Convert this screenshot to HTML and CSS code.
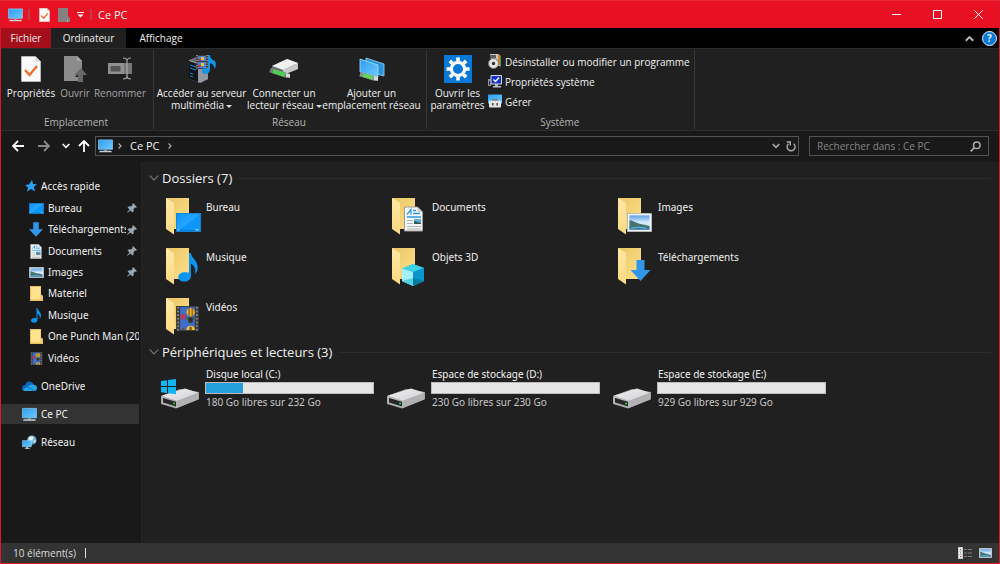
FILE: index.html
```
<!DOCTYPE html>
<html lang="fr">
<head>
<meta charset="utf-8">
<title>Ce PC</title>
<link rel="stylesheet" href="styles.css">
</head>
<body>
<svg class="sprite" aria-hidden="true">
  <defs>
    <linearGradient id="gScreen" x1="0" y1="0" x2="1" y2="1"><stop offset="0" stop-color="#2f9df0"/><stop offset="1" stop-color="#6cc8ff"/></linearGradient>
    <linearGradient id="gDesk" x1="0" y1="0" x2="1" y2="1"><stop offset="0" stop-color="#0a96fb"/><stop offset=".5" stop-color="#27a5ff"/><stop offset=".51" stop-color="#0c98fc"/><stop offset="1" stop-color="#0a96fb"/></linearGradient>
    <linearGradient id="gFold" x1="0" y1="0" x2="1" y2="1"><stop offset="0" stop-color="#e9c766"/><stop offset="1" stop-color="#ffe08a"/></linearGradient>
    <linearGradient id="gFlap" x1="0" y1="0" x2="0" y2="1"><stop offset="0" stop-color="#ffe9a6"/><stop offset="1" stop-color="#fbd981"/></linearGradient>
    <linearGradient id="gDrive" x1="0" y1="0" x2="1" y2="1"><stop offset="0" stop-color="#f2f2f3"/><stop offset="1" stop-color="#cfcfd2"/></linearGradient>
    <linearGradient id="gSky" x1="0" y1="0" x2="0" y2="1"><stop offset="0" stop-color="#5c9fe8"/><stop offset=".5" stop-color="#d8ecfb"/><stop offset="1" stop-color="#9fd0ee"/></linearGradient>
    <radialGradient id="gGlobe" cx=".4" cy=".35" r=".7"><stop offset="0" stop-color="#c9eefa"/><stop offset="1" stop-color="#3a8db5"/></radialGradient>
  </defs>
  <symbol id="monitor" viewBox="0 0 16 14"><path d="M.5.5h15v10H.5z" fill="url(#gScreen)" stroke="#8fd0f5" stroke-width=".7"/><path d="M7 11h2v1.2H7z" fill="#b8c4cc"/><path d="M2 12h12l1 1.6H1z" fill="#c3d3dc"/></symbol>
  <symbol id="doccheck" viewBox="0 0 20 26"><path d="M.5.5h14l5 5v20H.5z" fill="#fbfbfb" stroke="#d0d0d0" stroke-width=".6"/><path d="M14.500.5v5h5" fill="#d8d8d8"/><path d="M4 14l4.500 5L16 10" fill="none" stroke="#f26a26" stroke-width="2.300"/></symbol>
  <symbol id="docopen" viewBox="0 0 24 28"><path d="M1 1h13l5 5v10h-2l-5 6h3v4H1z" fill="#8c8c8c"/><path d="M14 1v5h5" fill="#a9a9a9"/><path d="M18 13l6 7h-4v7h-5v-7h-4z" fill="#696969"/></symbol>
  <symbol id="rename" viewBox="0 0 26 26"><path d="M1 7h16v11H1z" fill="#909090"/><path d="M3.500 10h10v5.500h-10z" fill="#565656"/><path d="M17 7h8v11h-8z" fill="#777"/><path d="M16 2q4 0 4 3v15q0 3-4 3M24 2q-4 0-4 3m0 15q0 3 4 3" fill="none" stroke="#a8a8a8" stroke-width="1.200"/></symbol>
  <symbol id="film" viewBox="0 0 22 24"><path d="M0 0h22v24H0z" fill="#3e3d3b"/><path d="M2 1v23M20 1v23" stroke="#999" stroke-width="1.500" stroke-dasharray="1.500 2"/><path d="M4 1h14v22H4z" fill="#3e6dcc"/><path d="M4 9h6v4H4z" fill="#90477f"/><circle cx="14" cy="6" r="4" fill="#e9b52f"/><path d="M12.500 2v8m3-8v8" stroke="#7d4a22"/><path d="M9 11h9l-4 6z" fill="#247244"/><path d="M12 11h4v5h-4z" fill="#3b2a28"/><path d="M10 23q0-4 4-4t4 4z" fill="#efc12e"/><path d="M13 20h2v3h-2zM6 21h2v2H6z" fill="#7d4a22"/><path d="M5 8h3v3H5z" fill="#d3373a"/></symbol>
  <symbol id="note" viewBox="0 0 20 30"><path d="M11 0h2c.5 5 7 8 7 15 0 3-1 5-3 7 1.500-5 0-9-4-11v13c0 3-3 5.500-7 5.500C2.500 29.500 0 27.500 0 25c0-3 3-5 7-5 1.500 0 3 .2 4 .7z" fill="#0b96f2"/></symbol>
  <symbol id="server" viewBox="0 0 28 28"><path d="M1 5l7-3 12 3v19l-8 4-11-4z" fill="#686d74"/><path d="M1 5l9 3v19l-9-3z" fill="#10151b"/><path d="M10 8l10-3v19l-8 4-2-1z" fill="#9398a0"/><path d="M1 5l9 3v1L1 6z" fill="#b5bbc1"/><path d="M2 10l6 2M2 13l6 2M2 18l3 1M2 21l3 1" stroke="#1d86c9"/><path d="M8 0h12v14H8z" fill="#383c42"/><path d="M10 1h8v5h-8zm0 6h8v6h-8z" fill="#507fd1"/><path d="M13 2h3v3h-3zm0 6h3v3h-3z" fill="#ecc33e"/><path d="M10 4h3v2h-3zm0 6h3v2h-3z" fill="#a4414e"/><path d="M9 0v14M19 0v14" stroke="#d4d5d6" stroke-dasharray="1 1.500"/><path d="M20 0h2q0 4 5 6 2 4-.5 8Q26 9 22 8v6q0 5-5 5-3 0-3-3t4-3q1 0 2 .3z" fill="#1394e5"/></symbol>
  <symbol id="netdrive" viewBox="0 0 30 20"><path d="M3 7L18 0l11 4v6l-15 6L3 12z" fill="#8b8d90"/><path d="M3 7L18 0l11 4-15 7z" fill="#f0f0f1"/><path d="M3 7l11 4v5L3 12z" fill="#6d7073"/><path d="M14 11l15-7v6l-15 6z" fill="#c7c8ca"/><path d="M1 11l18 6" stroke="#73787a" stroke-width="5"/><path d="M4 12l12 4" stroke="#4fcf52" stroke-width="4"/><path d="M17 14l4 1v4l-4-1z" fill="#d6dadd"/></symbol>
  <symbol id="netplace" viewBox="0 0 26 24"><path d="M7 1l18 6v12l-18-5z" fill="#2a92d8" stroke="#98d8fb" stroke-width=".8"/><path d="M1 2l18 6v12L1 15z" fill="url(#gScreen)" stroke="#a5ddfa" stroke-width=".8"/><path d="M1 17l16 5" stroke="#8d9092" stroke-width="4.500"/><path d="M4 18l10 3" stroke="#5fd458" stroke-width="3.500"/><path d="M15 19l4 1v4l-4-1z" fill="#d6dadd"/></symbol>
  <symbol id="gear" viewBox="0 0 28 28"><path d="M0 0h28v28H0z" fill="#0a78d7"/><circle cx="14" cy="14" r="6.600" fill="none" stroke="#fff" stroke-width="3.200"/><g stroke="#fff" stroke-width="3.600"><path id="tooth" d="M14 2.500v3.700M14 21.800v3.700M2.500 14h3.700M21.800 14h3.700"/><use href="#tooth" transform="rotate(45 14 14)"/></g></symbol>
  <symbol id="uninstall" viewBox="0 0 14 15"><path d="M2 0h8l3 2v10H4z" fill="#c7c8bd"/><path d="M10 1h2v10h-2z" fill="#d9822d"/><path d="M12 2h1v11h-1z" fill="#3f9b5b"/><path d="M2 1h6v3H2z" fill="#5c6066"/><circle cx="5.500" cy="9.500" r="5" fill="#e2e4e6" stroke="#777"/><circle cx="5.500" cy="9.500" r="1.700" fill="#333"/></symbol>
  <symbol id="sysprop" viewBox="0 0 14 13"><path d="M3 .5h10.500v8.500H3z" fill="#1432d0" stroke="#d6d8dc"/><path d="M5.500 4.500l2 2L11 2.500" fill="none" stroke="#fff" stroke-width="1.400"/><path d="M0 4h3v7H0z" fill="#8e9499"/><path d="M1 6h1v4H1z" fill="#333"/><path d="M7 9h3v2H7zM5 11h8v1.500H5z" fill="#b9bdc1"/></symbol>
  <symbol id="manage" viewBox="0 0 14 14"><path d="M0 0h14v9H0z" fill="url(#gScreen)"/><path d="M4 5h6v2H4z" fill="#555"/><rect x="1" y="6" width="12" height="7" rx="1" fill="#e3e4e6"/><path d="M4 8.500h1.500v2.500H4zm4.500 0H10v2.500H8.500z" fill="#44484d"/></symbol>
  <symbol id="desk" viewBox="0 0 26 18" preserveAspectRatio="none"><path d="M.5.5h25v17H.5z" fill="url(#gDesk)" stroke="#1683d4"/><path d="M1 16.500h24" stroke="#087bd0"/><path d="M1.500 16h2M20 16h4" stroke="#9bd7ff"/></symbol>
  <symbol id="down" viewBox="0 0 20 21"><path d="M6 0h8v10h6L10 21 0 10h6z" fill="#3296e8"/></symbol>
  <symbol id="doc" viewBox="0 0 19 25"><path d="M.5.5h13l5 5v19H.5z" fill="#f4f5f6" stroke="#9c9c9c"/><path d="M13.500.5v5h5z" fill="#cfd2d4"/><path d="M3 8l4-5v5M9 4h3M9 7h7M3 10.500h14" fill="none" stroke="#2c9be0" stroke-width="1.300"/><path d="M3 14h6M3 17h6M3 20h14M3 22.500h14" stroke="#aeb4b8"/><path d="M10 12.500h7v5h-7z" fill="#65a6d8"/><path d="M10 17.500v-3l7 2v1z" fill="#285c55"/></symbol>
  <symbol id="pic" viewBox="0 0 26 20" preserveAspectRatio="none"><path d="M.5.5h25v19H.5z" fill="#f3f5f6" stroke="#b4b9bc"/><path d="M2.500 2.500h21v15h-21z" fill="url(#gSky)"/><path d="M2.500 15V7.500c3 0 4 1.500 7 2.500 4 2 10 2 14 4v1z" fill="#47736b"/><path d="M2.500 14l21 .5v3h-21z" fill="#2f789e"/><path d="M4 16q8-2 16 0" stroke="#7cbfd3" fill="none"/></symbol>
  <symbol id="cube" viewBox="0 0 22 22"><path d="M0 4.500L11 0l11 4v13l-11 5-11-5z" fill="#29b8d4"/><path d="M0 4.500L11 0l11 4-11 4z" fill="#3fd0e4"/><path d="M0 4.500L11 8v14L0 17z" fill="#a4effa"/><path d="M11 8l11-4v13l-11 5z" fill="#0896d0"/><path d="M0 17l11-3v8z" fill="#55cfe2"/><path d="M11 14l11 3-11 5z" fill="#067b9d"/></symbol>
  <symbol id="smallfolder" viewBox="0 0 13 15"><path d="M0 0h11v9l2 1v5H0z" fill="#e5c062"/><path d="M1 1h9.500v12.500H1z" fill="#ffe38e"/><path d="M11 8.500l1.500 1V14H9.500v-2l1.500-1z" fill="#f2cd69"/></symbol>
  <symbol id="folder" viewBox="0 0 36 38"><path d="M0 0h23v31H6z" fill="url(#gFold)"/><path d="M0 0l8 5v31.500L0 31z" fill="url(#gFlap)"/></symbol>
  <symbol id="f-desk" viewBox="0 0 36 38"><use href="#folder" width="36" height="38"/><use href="#desk" x="10" y="15" width="25" height="19"/></symbol>
  <symbol id="f-doc" viewBox="0 0 36 38"><use href="#folder" width="36" height="38"/><use href="#doc" x="12" y="8" width="19" height="26"/></symbol>
  <symbol id="f-pic" viewBox="0 0 36 38"><use href="#folder" width="36" height="38"/><use href="#pic" x="9" y="15" width="25" height="19"/></symbol>
  <symbol id="f-note" viewBox="0 0 36 38"><use href="#folder" width="36" height="38"/><use href="#note" x="12" y="5" width="20" height="29"/></symbol>
  <symbol id="f-cube" viewBox="0 0 36 38"><use href="#folder" width="36" height="38"/><use href="#cube" x="10" y="16" width="22" height="22"/></symbol>
  <symbol id="f-down" viewBox="0 0 36 38"><use href="#folder" width="36" height="38"/><use href="#down" x="12" y="12" width="21" height="21"/></symbol>
  <symbol id="f-film" viewBox="0 0 36 38"><use href="#folder" width="36" height="38"/><use href="#film" x="10" y="8" width="23" height="25"/></symbol>
  <symbol id="drive" viewBox="0 0 38 30"><path d="M0 17L19 10l19 3v7L15 29.500 0 25z" fill="#9b9b9d"/><path d="M.5 16.800L24 9.500l13.500 4.200L16 22z" fill="url(#gDrive)"/><path d="M16 22l21.500-8.300v6.800L16 29z" fill="#b1b1b4"/><path d="M.5 17L16 22v7L.5 24.500z" fill="#b8b8ba"/><path d="M2 19l13 3.800v4.700L2 23.500z" fill="#28282a"/><circle cx="13" cy="24.500" r="1" fill="#1fe82b"/></symbol>
  <symbol id="drivewin" viewBox="0 0 38 30"><use href="#drive" width="38" height="30"/><path d="M0 2l6-.8V7H0zM7 1l8-1v7H7zM0 8h6v6l-6-.8zM7 8h8v7.200l-8-1z" fill="#12b5f0"/></symbol>
  <symbol id="star" viewBox="0 0 12 12"><path d="M7 0l1 4 4 .3L8.800 7 10 11.500 6 9l-4 2.800L3 7.500 0 5l4-.5z" fill="#2aa2f0"/></symbol>
  <symbol id="cloud" viewBox="0 0 15 10"><path d="M3 4C4 1 7-.8 10 1.500c1 .8 1.500 1.500 1.800 2.500C14 4 15 5.500 15 7s-1 3-3 3H3C1 10 0 8.500 0 7s1-3 3-3z" fill="#0c67c0"/><path d="M2 8l6-4q3-1 4 0c2 0 3 1.500 3 3s-1 3-3 3H3q-1 0-2-1z" fill="#2aa5ea"/><path d="M5 5.800l7 3.700" stroke="#1583d2" stroke-width="1.500"/></symbol>
  <symbol id="network" viewBox="0 0 16 15"><circle cx="10.500" cy="5" r="5" fill="url(#gGlobe)"/><path d="M7 3l4-2 1 2-3 3zm5 3l3-1-1 3z" fill="#edfaff"/><path d="M.5 5.500h9.500v6.500H.5z" fill="url(#gScreen)" stroke="#9bd7f7" stroke-width=".6"/><path d="M4.500 12h2v1.500h2v1H3v-1h1.500z" fill="#afc7d3"/></symbol>
  <symbol id="pin" viewBox="0 0 10 10"><path d="M6 0l4 4-1 .7-1-.2-1.500 1.700.2 2L5.500 9.500l-2-2L.5 9.800 0 9.500 2.500 6.500l-2-2L2 3.200l2 .2L5.600 2l-.3-1z" fill="#9aa7b1"/></symbol>
  <symbol id="chev" viewBox="0 0 10 6"><path d="M.7.7L5 5 9.300.7" fill="none" stroke="currentColor" stroke-width="1.200"/></symbol>
  <symbol id="chevbold" viewBox="0 0 8 6"><path d="M.7 1L4 4.300 7.300 1" fill="none" stroke="currentColor" stroke-width="1.700"/></symbol>
  <symbol id="arrow" viewBox="0 0 12 12"><path d="M12 6H1.500M6 1L1 6l5 5" fill="none" stroke="currentColor" stroke-width="1.800"/></symbol>
  <symbol id="sep" viewBox="0 0 4 6"><path d="M.6.5L3 3 .6 5.500" fill="none" stroke="currentColor" stroke-width="1.200"/></symbol>
</svg>

<div class="window">
  <header class="titlebar">
    <svg class="ic-mon"><use href="#monitor"/></svg>
    <span class="bar"></span>
    <button class="plain q1" aria-label="Propriétés"><svg class="ic-doc"><use href="#doccheck"/></svg></button>
    <button class="plain q2" aria-label="Nouveau dossier"><svg class="ic-new" viewBox="0 0 12 14"><path d="M0 0h10v8l2 2v4H0z" fill="#878080"/><path d="M10 10v4H8" fill="#a79b9b"/></svg></button>
    <button class="plain q3" aria-label="Personnaliser"><svg class="ic-cust" viewBox="0 0 7 6"><path d="M0 .5h7" stroke="#fff"/><path d="M.5 2.500h6l-3 3z" fill="#fff"/></svg></button>
    <span class="bar"></span>
    <h1 class="title">Ce PC</h1>
    <div class="winbtns">
      <button class="plain" aria-label="Réduire"><svg class="ic-win" viewBox="0 0 9 9"><path d="M0 4.500h9" stroke="#fff"/></svg></button>
      <button class="plain" aria-label="Agrandir"><svg class="ic-win" viewBox="0 0 9 9"><path d="M.5.5h8v8h-8z" fill="none" stroke="#fff"/></svg></button>
      <button class="plain" aria-label="Fermer"><svg class="ic-win" viewBox="0 0 9 9"><path d="M.3.3l8.400 8.400M8.700.3L.3 8.700" stroke="#fff"/></svg></button>
    </div>
  </header>

  <div class="tabs">
    <button class="tab file">Fichier</button>
    <button class="tab active">Ordinateur</button>
    <button class="tab view">Affichage</button>
    <div class="tabtools">
      <button class="plain" aria-label="Réduire le ruban"><svg class="ic-up"><use href="#chevbold"/></svg></button>
      <button class="help" aria-label="Aide">?</button>
    </div>
  </div>

  <div class="ribbon">
    <section class="group g1">
      <div class="tools">
        <button class="big w-prop"><span class="pict"><svg class="p-doc"><use href="#doccheck"/></svg></span>Propriétés</button>
        <button class="big w-open off"><span class="pict"><svg class="p-open"><use href="#docopen"/></svg></span>Ouvrir</button>
        <button class="big w-ren off"><span class="pict"><svg class="p-ren"><use href="#rename"/></svg></span>Renommer</button>
      </div>
      <h2 class="caption">Emplacement</h2>
    </section>
    <section class="group g2">
      <div class="tools">
        <button class="big w-srv"><span class="pict"><svg class="p-srv"><use href="#server"/></svg></span>Accéder au serveur<br>multimédia<i class="tri"></i></button>
        <button class="big w-con"><span class="pict"><svg class="p-net"><use href="#netdrive"/></svg></span>Connecter un<br>lecteur réseau<i class="tri"></i></button>
        <button class="big w-add"><span class="pict"><svg class="p-place"><use href="#netplace"/></svg></span>Ajouter un<br>emplacement réseau</button>
      </div>
      <h2 class="caption">Réseau</h2>
    </section>
    <section class="group g3">
      <div class="tools">
        <button class="big w-set"><span class="pict"><svg class="p-srv"><use href="#gear"/></svg></span>Ouvrir les<br>paramètres</button>
        <div class="stack">
          <button class="small"><svg><use href="#uninstall"/></svg>Désinstaller ou modifier un programme</button>
          <button class="small"><svg><use href="#sysprop"/></svg>Propriétés système</button>
          <button class="small"><svg><use href="#manage"/></svg>Gérer</button>
        </div>
      </div>
      <h2 class="caption">Système</h2>
    </section>
  </div>

  <div class="navbar">
    <div class="navbtns">
      <button class="plain" aria-label="Précédent"><svg class="ic-arrow"><use href="#arrow"/></svg></button>
      <button class="plain fwd" aria-label="Suivant"><svg class="ic-arrow"><use href="#arrow"/></svg></button>
      <button class="plain recent" aria-label="Récents"><svg class="ic-rec"><use href="#chevbold"/></svg></button>
      <button class="plain up" aria-label="Dossier parent"><svg class="ic-arrow"><use href="#arrow"/></svg></button>
    </div>
    <div class="address">
      <svg class="ic-mon"><use href="#monitor"/></svg>
      <svg class="ic-sep"><use href="#sep"/></svg>
      <a href="#" class="crumb">Ce PC</a>
      <svg class="ic-sep"><use href="#sep"/></svg>
      <button class="plain more" aria-label="Emplacements précédents"><svg class="ic-rec"><use href="#chevbold"/></svg></button>
      <button class="plain reload" aria-label="Actualiser"><svg class="ic-load" viewBox="0 0 10 11"><path d="M7.600 2.700A4 4 0 1 1 2.600 2.700M.7 1h3.600v3.600" fill="none" stroke="#aaa" stroke-width="1.400"/></svg></button>
    </div>
    <label class="search">
      <input type="search" aria-label="Rechercher" placeholder="Rechercher dans : Ce PC">
      <svg class="ic-find" viewBox="0 0 11 11"><circle cx="6.800" cy="4.200" r="3.300" fill="none" stroke="#aaa" stroke-width="1.500"/><path d="M4.400 6.600L.7 10.300" stroke="#aaa" stroke-width="1.700"/></svg>
    </label>
  </div>

  <div class="body">
    <nav class="side">
      <div class="quick">
        <a href="#" class="row root"><svg><use href="#star" x="3" y="1" width="12" height="12"/></svg><span>Accès rapide</span></a>
        <a href="#" class="row"><svg><use href="#desk" y="2" width="15" height="11"/></svg><span class="cut">Bureau</span><svg class="ic-pin"><use href="#pin"/></svg></a>
        <a href="#" class="row"><svg><use href="#down" y="0" width="14" height="15"/></svg><span class="cut">Téléchargements</span><svg class="ic-pin"><use href="#pin"/></svg></a>
        <a href="#" class="row"><svg><use href="#doc" x="1" width="12" height="15"/></svg><span class="cut">Documents</span><svg class="ic-pin"><use href="#pin"/></svg></a>
        <a href="#" class="row"><svg><use href="#pic" y="2" width="15" height="11"/></svg><span class="cut">Images</span><svg class="ic-pin"><use href="#pin"/></svg></a>
        <a href="#" class="row"><svg><use href="#smallfolder" x="1" width="13" height="15"/></svg><span>Materiel</span></a>
        <a href="#" class="row"><svg><use href="#note" x="2" width="10" height="15"/></svg><span>Musique</span></a>
        <a href="#" class="row"><svg><use href="#smallfolder" x="1" width="13" height="15"/></svg><span>One Punch Man (20</span></a>
        <a href="#" class="row"><svg><use href="#film" x="1" y="1" width="13" height="13"/></svg><span>Vidéos</span></a>
      </div>
      <div class="roots">
        <a href="#" class="row root"><svg><use href="#cloud" y="2" width="15" height="10"/></svg><span>OneDrive</span></a>
        <a href="#" class="row root sel"><svg><use href="#monitor" width="15" height="15"/></svg><span>Ce PC</span></a>
        <a href="#" class="row root"><svg><use href="#network" width="15" height="15"/></svg><span>Réseau</span></a>
      </div>
    </nav>

    <main class="main">
      <h2 class="head"><svg class="ic-chev"><use href="#chev"/></svg>Dossiers (7)</h2>
      <div class="grid folders">
        <a href="#" class="item"><svg><use href="#f-desk"/></svg>Bureau</a>
        <a href="#" class="item"><svg><use href="#f-doc"/></svg>Documents</a>
        <a href="#" class="item"><svg><use href="#f-pic"/></svg>Images</a>
        <a href="#" class="item"><svg><use href="#f-note"/></svg>Musique</a>
        <a href="#" class="item"><svg><use href="#f-cube"/></svg>Objets 3D</a>
        <a href="#" class="item"><svg><use href="#f-down"/></svg>Téléchargements</a>
        <a href="#" class="item"><svg><use href="#f-film"/></svg>Vidéos</a>
      </div>
      <h2 class="head"><svg class="ic-chev"><use href="#chev"/></svg>Périphériques et lecteurs (3)</h2>
      <div class="grid drives">
        <a href="#" class="disk"><svg><use href="#drivewin"/></svg><span class="info"><span class="name">Disque local (C:)</span><span class="gauge"><span class="used" style="width:22.4%"></span></span><span class="free">180 Go libres sur 232 Go</span></span></a>
        <a href="#" class="disk"><svg><use href="#drive"/></svg><span class="info"><span class="name">Espace de stockage (D:)</span><span class="gauge"></span><span class="free">230 Go libres sur 230 Go</span></span></a>
        <a href="#" class="disk"><svg><use href="#drive"/></svg><span class="info"><span class="name">Espace de stockage (E:)</span><span class="gauge"></span><span class="free">929 Go libres sur 929 Go</span></span></a>
      </div>
    </main>
  </div>

  <footer class="status">
    <span class="count">10 élément(s)</span>
    <div class="views">
      <button class="plain" aria-label="Détails"><svg class="ic-det" viewBox="0 0 15 12"><path d="M0 0h5v12H0z" fill="#c9c9c9"/><path d="M1 1h3v2.600H1zM1 4.700h3v2.600H1zM1 8.400h3V11H1z" fill="#f5f5f5"/><path d="M2 2h1v1H2zM2 5.500h1v1H2z" fill="#3c6e50"/><path d="M2 9h1v1H2z" fill="#b33"/><path d="M6 2.500h3m1 0h4M6 6h3m1 0h4M6 9.500h3m1 0h4" stroke="#7b7b7b"/></svg></button>
      <button class="plain" aria-label="Grandes icônes"><svg class="ic-large"><use href="#pic" width="13" height="10"/></svg></button>
    </div>
  </footer>
</div>
</body>
</html>
```
FILE: styles.css
```
* { box-sizing: border-box; }
body {
  margin: 0;
  font-family: "Open Sans", "Noto Sans", sans-serif;
  font-size: 10px;
  line-height: 12px;
  color: #f0f0f0;
}
svg { display: block; flex: none; }
a { color: inherit; text-decoration: none; }
h1, h2 { margin: 0; font-weight: 400; }
button { font: inherit; color: inherit; padding: 0; border: 0; background: none; }
.sprite { position: absolute; width: 0; height: 0; }
.plain { display: flex; align-items: center; justify-content: center; }

.window {
  min-height: 100vh;
  display: flex;
  flex-direction: column;
  border: 1px solid #d81a2a;
  border-top-color: #ea2a38;
  background: #202020;
}

.titlebar { display: flex; align-items: center; height: 27px; padding-left: 7px; background: #e81123; }
.ic-mon { width: 15px; height: 14px; }
.bar { width: 2px; height: 11px; margin-left: 5px; background: #c43a46; }
.q1 { margin-left: 9px; }
.q2 { margin-left: 8px; }
.q3 { margin-left: 7px; }
.q3 + .bar { margin-left: 6px; }
.ic-doc { width: 11px; height: 14px; }
.ic-new { width: 12px; height: 14px; }
.ic-cust { width: 7px; height: 6px; }
.title { margin-left: 6px; font-size: 11px; line-height: 14px; }
.winbtns { display: flex; margin-left: auto; }
.winbtns .plain { width: 41px; height: 27px; }
.ic-win { width: 9px; height: 9px; }

.tabs { display: flex; height: 20px; background: #000; }
.tab { height: 20px; }
.file { width: 50px; background: #a50e1b; }
.active { width: 75px; background: #202020; }
.view { width: 70px; }
.tabtools { display: flex; align-items: center; gap: 8px; margin-left: auto; padding-right: 2px; }
.ic-up { width: 9px; height: 7px; color: #bbb; transform: scaleY(-1); }
.help { width: 15px; height: 15px; border: 1px solid #e5eef5; border-radius: 50%; background: #0a78d7; font-weight: 700; line-height: 12px; }

.ribbon { display: flex; border-top: 1px solid #2b2b2b; border-bottom: 1px solid #2d2d2d; }
.group { display: flex; flex-direction: column; justify-content: space-between; height: 79px; margin: 1px 0; border-right: 1px solid #383838; }
.g1 { padding: 0 5px 0 3px; }
.g2 { padding: 0 4px 0 2px; }
.g3 { padding: 0 4px 0 3px; }
.tools { display: flex; padding-top: 1px; }
.big { display: block; white-space: nowrap; text-align: center; }
.off { color: #a5a5a5; }
.pict { display: flex; align-items: center; justify-content: center; height: 36px; }
.w-prop { width: 54px; }
.w-open { width: 34px; }
.w-ren { width: 56px; }
.w-srv { width: 91px; }
.w-con { width: 74px; }
.w-add { width: 101px; }
.w-set { width: 55px; }
.p-doc { width: 20px; height: 26px; }
.p-open { width: 24px; height: 28px; }
.p-ren { width: 26px; height: 26px; }
.p-srv { width: 28px; height: 28px; }
.p-net { width: 30px; height: 20px; }
.p-place { width: 26px; height: 24px; }
.tri { display: inline-block; margin-left: 2px; vertical-align: middle; border: 3px solid transparent; border-top-color: #ddd; border-bottom: 0; }
.stack { display: flex; flex-direction: column; gap: 5px; padding: 3px 0 0 3px; }
.small { display: flex; align-items: center; gap: 3px; height: 15px; white-space: nowrap; }
.small svg { width: 14px; height: 15px; }
.caption { font-size: 10px; line-height: 14px; text-align: center; color: #b5b5b5; }

.navbar { display: flex; align-items: center; height: 31px; padding: 0 10px 1px 0; background: #191919; }
.navbtns { display: flex; align-items: center; width: 94px; gap: 14px; padding-left: 11px; color: #fff; }
.ic-arrow { width: 12px; height: 12px; }
.fwd { color: #888; }
.fwd svg { transform: scaleX(-1); }
.up svg { transform: rotate(90deg); }
.navbtns .recent { margin-left: -2px; }
.navbtns .up { margin-left: -6px; }
.ic-rec { width: 8px; height: 6px; }
.address { flex: 1; display: flex; align-items: center; height: 20px; padding: 0 2px; border: 1px solid #535353; color: #aaa; }
.ic-sep { width: 4px; height: 6px; margin: 0 8px 0 5px; }
.crumb { color: #f0f0f0; font-size: 11px; }
.crumb + .ic-sep { margin-left: 8px; }
.more { margin-left: auto; }
.reload { margin-left: 6px; }
.ic-load { width: 10px; height: 11px; }
.search { display: flex; align-items: center; width: 180px; height: 20px; margin-left: 10px; padding: 0 7px; border: 1px solid #535353; }
.search input { flex: 1; min-width: 0; padding: 0; border: 0; outline: 0; background: none; font: inherit; color: #fff; }
.search input::placeholder { color: #858585; opacity: 1; }
.ic-find { width: 11px; height: 11px; }

.body { flex: 1; display: flex; font-family: "Noto Sans", "Open Sans", sans-serif; }
.side { width: 141px; padding: 14px 2px 0 0; background: #191919; border-right: 1px solid #242424; }
.quick { display: grid; grid-auto-rows: 1fr; height: 193px; }
.roots { display: grid; gap: 8px; padding-top: 7px; }
.row { display: flex; align-items: center; gap: 4px; min-width: 0; min-height: 20px; padding-left: 28px; overflow: hidden; white-space: nowrap; }
.row svg { width: 15px; height: 15px; }
.root { padding-left: 21px; }
.row span { overflow: hidden; line-height: 15px; }
.row .cut { flex: 1; }
.row .ic-pin { width: 10px; height: 10px; margin: 0 2px 0 -3px; }
.sel { background: #333; }

.main { flex: 1; min-width: 0; padding: 7px 0 0 7px; }
.head { display: flex; align-items: center; padding-right: 8px; font-family: "Open Sans", "Noto Sans", sans-serif; font-size: 13px; line-height: 18px; }
.head::after { content: ""; flex: 1; height: 1px; margin-left: 6px; background: #2c2c2c; }
.ic-chev { width: 10px; height: 6px; margin-right: 3px; color: #777; }
.grid { display: grid; grid-template-columns: repeat(auto-fill, 226px); padding-left: 12px; }
.folders { grid-auto-rows: 38px; row-gap: 12px; padding-top: 11px; padding-bottom: 7px; }
.item { display: flex; gap: 4px; padding-left: 5px; line-height: 18px; }
.item svg { width: 36px; height: 38px; }
.drives { padding-top: 6px; }
.disk { display: flex; align-items: flex-end; gap: 6px; }
.disk svg { width: 38px; height: 30px; }
.info { display: flex; flex-direction: column; width: 169px; line-height: 14px; }
.name, .free { padding-left: 1px; }
.gauge { display: block; height: 12px; margin-top: 1px; border: 1px solid #bcbcbc; background: #e6e6e6; }
.used { display: block; height: 100%; background: #26a0da; }
.free { padding-top: 1px; color: #c6c6c6; }

.status { display: flex; align-items: center; justify-content: space-between; height: 20px; padding: 0 7px 0 12px; background: #333; }
.count { padding-right: 9px; border-right: 1px solid #ddd; line-height: 10px; color: #ddd; }
.views { display: flex; align-items: center; gap: 6px; }
.ic-det { width: 15px; height: 12px; }
.ic-large { width: 13px; height: 10px; }
```
